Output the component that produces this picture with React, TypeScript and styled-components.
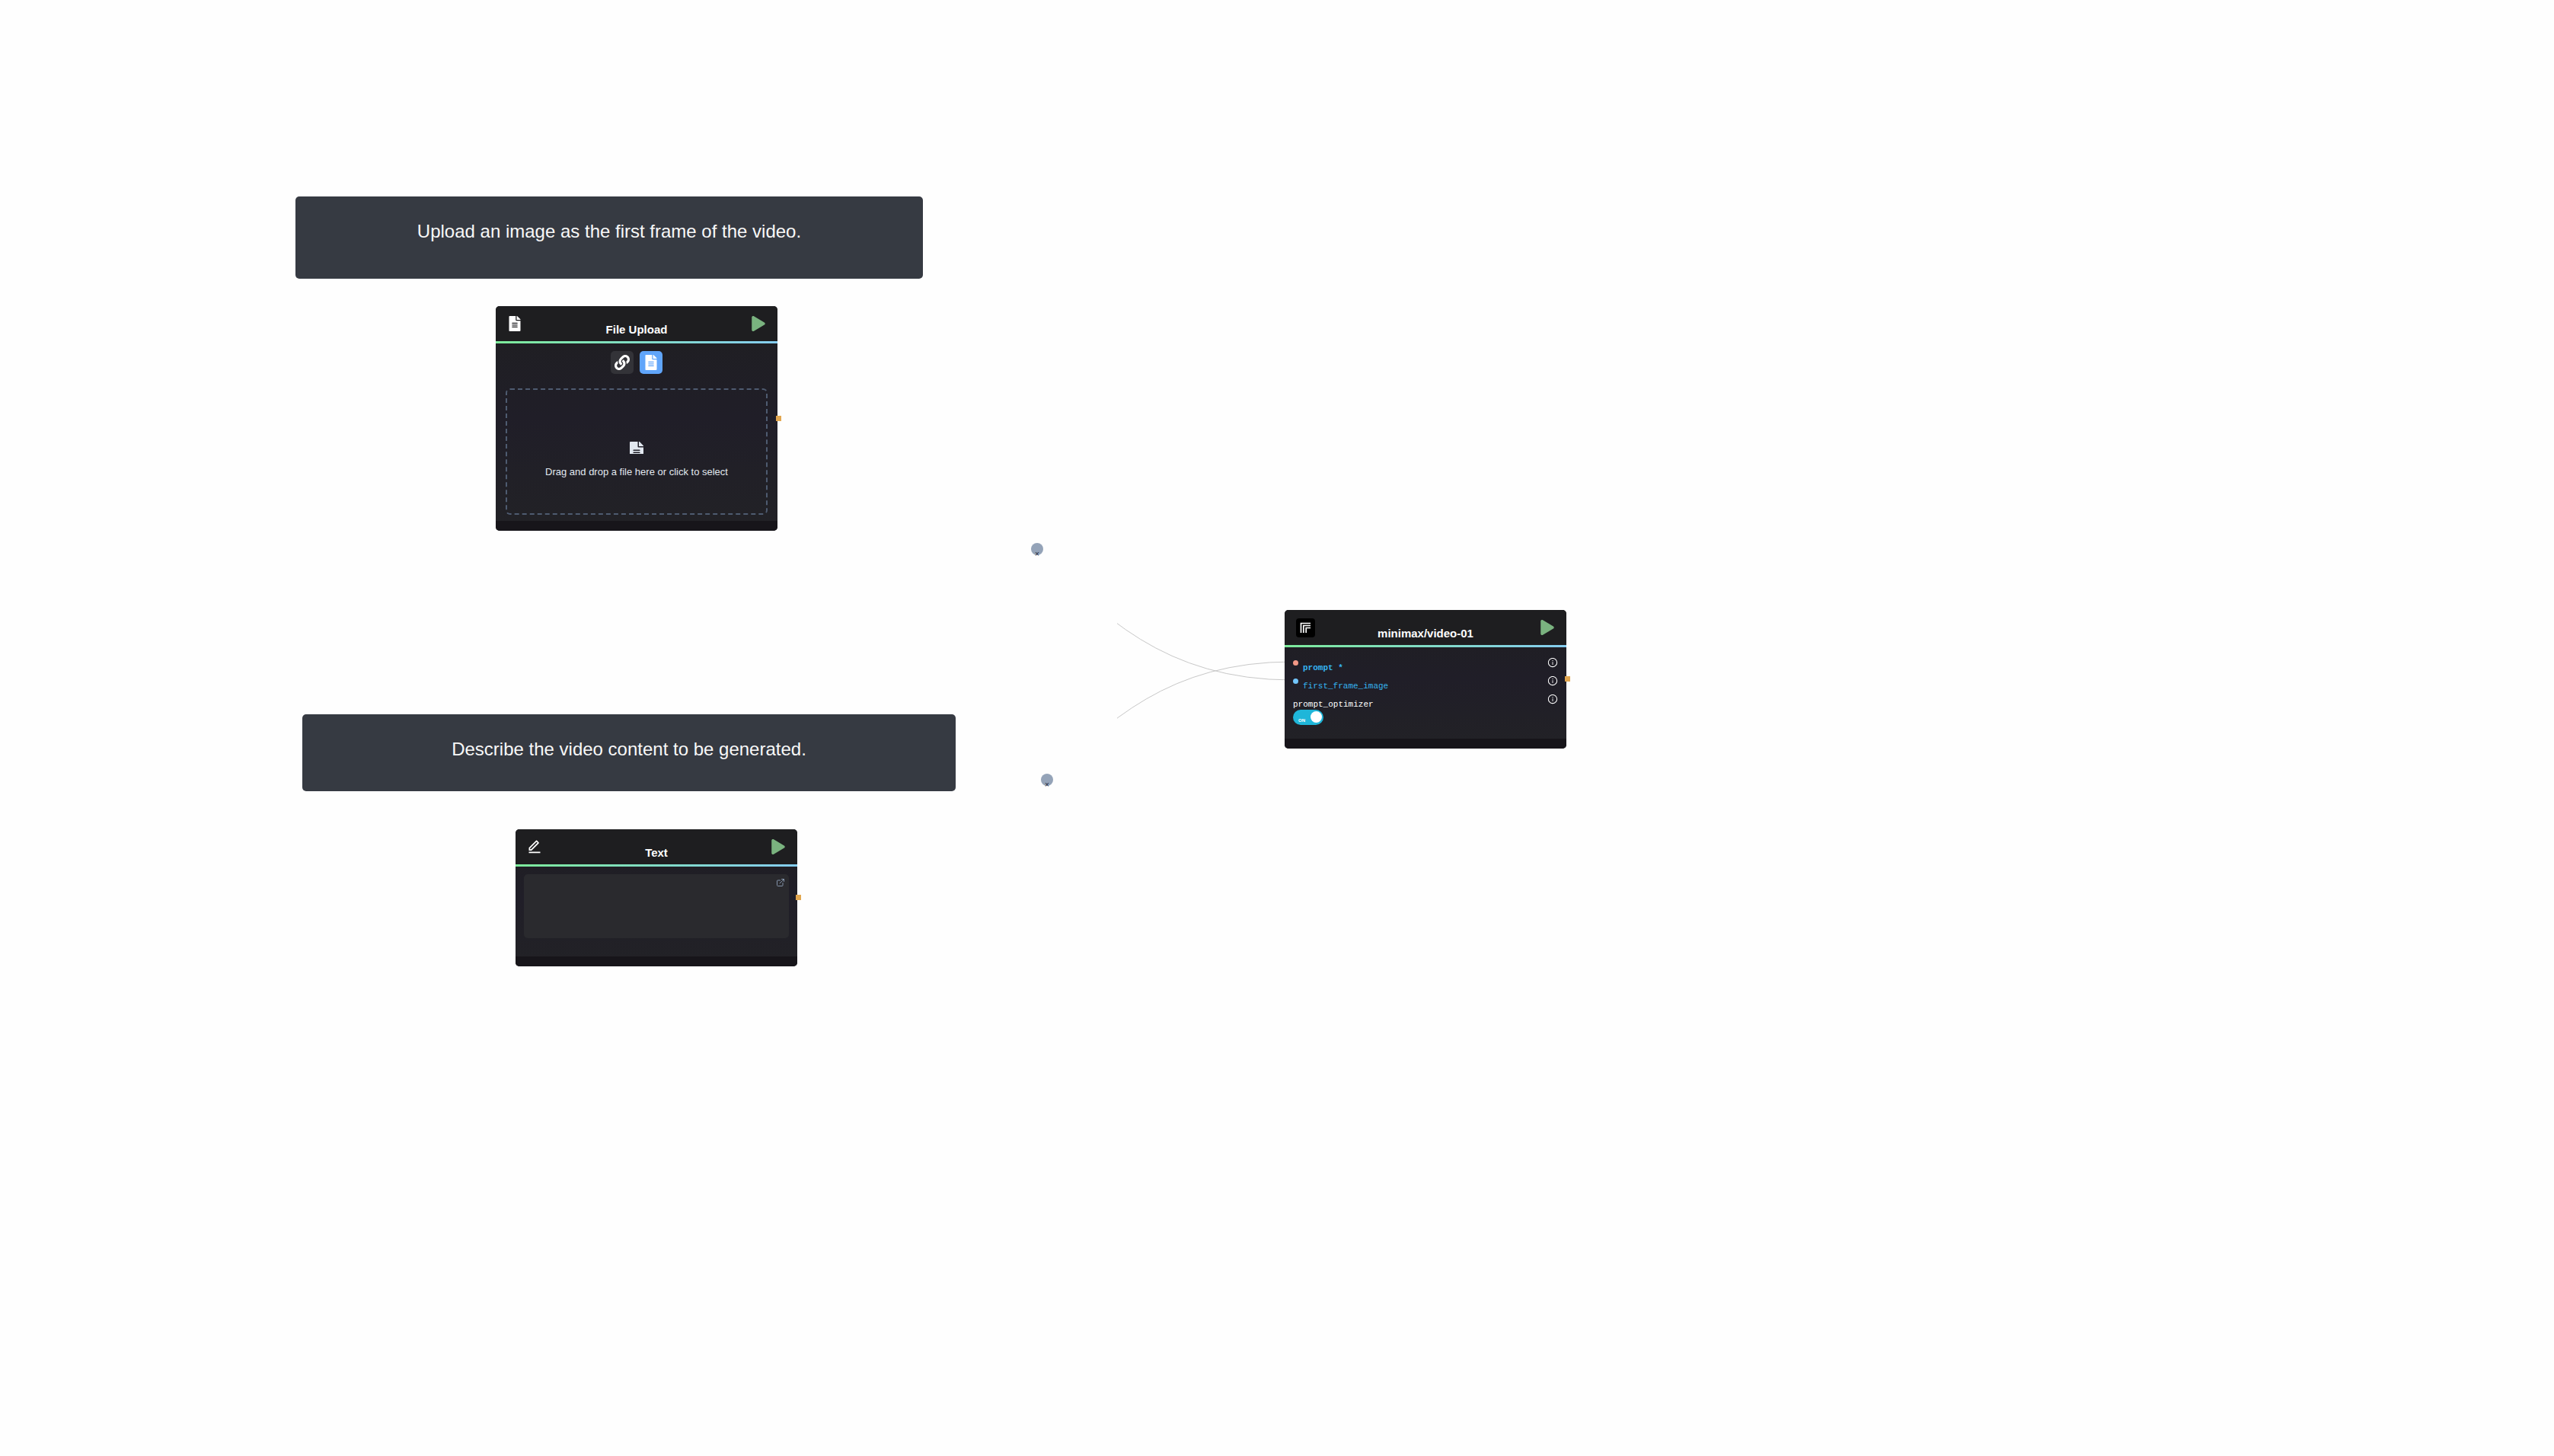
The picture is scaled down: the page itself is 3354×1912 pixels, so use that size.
import React from "react";
import styled, { createGlobalStyle } from "styled-components";
import { FaFileAlt, FaLink, FaPlay } from "react-icons/fa";
import { FiExternalLink } from "react-icons/fi";
import { AiOutlineInfoCircle } from "react-icons/ai";

const sans = `"Liberation Sans", Arial, sans-serif`;
const mono = `"Liberation Mono", "DejaVu Sans Mono", monospace`;

const GlobalStyle = createGlobalStyle`
  *, *::before, *::after { box-sizing: border-box; }
  body { margin: 0; background: #fefefe; font-family: ${sans}; }
  button { font: inherit; border: 0; padding: 0; background: none; cursor: pointer; }
`;

const Canvas = styled.main`
  position: relative;
  min-height: 100vh;
  overflow: hidden;
`;

/* Free canvas item: its place is part of the flow document. */
const Placed = styled.div<{ $x: number; $y: number; $w: number; $h: number }>`
  position: absolute;
  left: ${(p) => p.$x}px;
  top: ${(p) => p.$y}px;
  width: ${(p) => p.$w}px;
  height: ${(p) => p.$h}px;
`;

const Note = styled(Placed)`
  padding: 31px 20px;
  border-radius: 5px;
  background: #363a42;
  color: #f8f8f8;
  font-size: 24px;
  line-height: 30px;
  text-align: center;
`;

const Node = styled(Placed)`
  display: flex;
  flex-direction: column;
  border-radius: 5px;
  background: linear-gradient(#1f1f21, #201e28 50%, #222226);
  color: #fff;
`;

const Header = styled.header`
  display: grid;
  grid-template-columns: 30px 1fr 30px;
  align-items: center;
  height: 46px;
  padding: 0 10px;
  border-radius: 5px 5px 0 0;
  background: #1e1e20;
`;

const HeaderIcon = styled.span`
  display: flex;
  justify-content: center;
  font-size: 20px;
`;

const Title = styled.h2`
  margin: 0;
  padding-top: 16px;
  font-size: 15px;
  line-height: 20px;
  font-weight: 700;
  text-align: center;
`;

const Run = styled.button`
  display: flex;
  justify-content: center;
  color: #7ab37f;
  font-size: 20px;
`;

const Rule = styled.div`
  height: 3px;
  background: linear-gradient(90deg, #7deb9b, #85cdf0);
`;

const Body = styled.div<{ $dense?: boolean }>`
  flex: 1;
  display: flex;
  flex-direction: column;
  padding: ${(p) => (p.$dense ? "8px 11px" : "10px 11px 8px")};
`;

const Footer = styled.footer`
  height: 13px;
  border-radius: 0 0 5px 5px;
  background: #17151a;
`;

const OutPort = styled.i`
  position: absolute;
  right: -5px;
  top: 50%;
  width: 7px;
  height: 7px;
  margin-top: -4px;
  background: #e2a750;
`;

const Modes = styled.div`
  display: flex;
  justify-content: center;
  gap: 8px;
`;

const Mode = styled.button<{ $on?: boolean }>`
  display: grid;
  place-items: center;
  width: 30px;
  height: 30px;
  border-radius: 5px;
  background: ${(p) => (p.$on ? "#60a5fa" : "#333338")};
  color: #fff;
  font-size: 20px;
`;

const Drop = styled.button`
  flex: 1;
  display: flex;
  flex-direction: column;
  align-items: center;
  justify-content: center;
  gap: 16px;
  margin: 19px 2px 0;
  padding-top: 22px;
  border: 2px dashed #4e5b70;
  border-radius: 6px;
  color: #e2e8f0;
  font-size: 13px;
  line-height: 16px;
`;

const DropIcon = styled.span`
  height: 16px;
  overflow: hidden;
  font-size: 24px;
  line-height: 1;
`;

const Field = styled.div`
  position: relative;
  height: 84px;
`;

const Area = styled.textarea`
  display: block;
  width: 100%;
  height: 100%;
  border: 0;
  border-radius: 5px;
  resize: none;
  background: #2a2a2e;
  color: #fff;
`;

const Expand = styled.button`
  position: absolute;
  right: 5px;
  top: 5px;
  display: flex;
  color: #8494ab;
  font-size: 12px;
`;

const Row = styled.div<{ $link?: boolean }>`
  display: flex;
  align-items: center;
  height: 24px;
  color: ${(p) => (p.$link ? "#35b4f1" : "#fff")};
  font-family: ${mono};
  font-size: 11px;
  line-height: 14px;
`;

const Dot = styled.i<{ $c: string }>`
  width: 7px;
  height: 7px;
  margin-right: 6px;
  border-radius: 50%;
  background: ${(p) => p.$c};
`;

const Name = styled.label<{ $bold?: boolean }>`
  flex: 1;
  padding-top: 14px;
  font-weight: ${(p) => (p.$bold ? 700 : 400)};
`;

const Info = styled.button`
  display: flex;
  color: #fff;
  font-size: 14px;
`;

const Switch = styled.span`
  position: relative;
  display: block;
  width: 40px;
  height: 20px;
  margin-top: 2px;
  border-radius: 10px;
  background: #1fb6d9;
`;

const SwitchInput = styled.input`
  position: absolute;
  inset: 0;
  width: 100%;
  height: 100%;
  margin: 0;
  opacity: 0;
  cursor: pointer;
`;

const Knob = styled.span`
  position: absolute;
  right: 2px;
  top: 2px;
  width: 15px;
  height: 15px;
  border-radius: 50%;
  background: #fff;
`;

const On = styled.span`
  position: absolute;
  left: 7px;
  top: 11px;
  font: 700 6px/6px ${sans};
`;

const Edges = styled.svg`
  position: absolute;
  left: 1467px;
  top: 800px;
  width: 234px;
  height: 160px;
  fill: none;
  stroke: #c8c8c8;
  stroke-width: 1;
`;

const Remove = styled.button<{ $x: number; $y: number }>`
  position: absolute;
  left: ${(p) => p.$x}px;
  top: ${(p) => p.$y}px;
  display: flex;
  align-items: flex-start;
  justify-content: center;
  width: 16px;
  height: 16px;
  border-radius: 50%;
  background: #94a3b8;
  color: #1e293b;
`;

const Cross = styled.span`
  padding-top: 10px;
  font-size: 10px;
  line-height: 10px;
`;

const PenIcon = () => (
  <svg width="20" height="20" viewBox="0 0 24 24" fill="currentColor" aria-hidden="true">
    <path d="M6.414 15.890 16.556 5.748l-1.414-1.414L5 14.476v1.414h1.414zm.829 2H3v-4.243L14.435 2.212a1 1 0 0 1 1.414 0l2.829 2.829a1 1 0 0 1 0 1.414L7.243 17.890zM3 19.890h18v2H3v-2z" />
  </svg>
);

const LogoSvg = styled.svg`
  flex: none;
  margin-left: 5px;
`;

const Logo = () => (
  <LogoSvg width="25" height="25" viewBox="0 0 25 25" aria-hidden="true">
    <rect width="25" height="25" rx="4" fill="#000" />
    <path d="M6.500 19V6.500H19M9.800 19V9.500H19M13.200 19V12.500H19" fill="none" stroke="#fff" strokeWidth="1.700" />
  </LogoSvg>
);

const Shell = (p: {
  x: number; y: number; h: number; title: string; dense?: boolean; icon: React.ReactNode; children: React.ReactNode;
}) => (
  <Node $x={p.x} $y={p.y} $w={370} $h={p.h}>
    <Header>
      <HeaderIcon>{p.icon}</HeaderIcon>
      <Title>{p.title}</Title>
      <Run aria-label={`Run ${p.title}`}><FaPlay /></Run>
    </Header>
    <Rule />
    <Body $dense={p.dense}>{p.children}</Body>
    <Footer />
    <OutPort />
  </Node>
);

export default function App() {
  return (
    <>
      <GlobalStyle />
      <Canvas>
        <Edges viewBox="1467 800 234 160" aria-hidden="true">
          <path d="M1026 550C1361 550 1361 893 1697 893" />
          <path d="M1052 1182C1374 1182 1374 869 1697 869" />
        </Edges>
        <Remove $x={1354} $y={713} aria-label="Remove image connection"><Cross>×</Cross></Remove>
        <Remove $x={1367} $y={1016} aria-label="Remove text connection"><Cross>×</Cross></Remove>

        <Note $x={388} $y={258} $w={824} $h={108}>Upload an image as the first frame of the video.</Note>
        <Note $x={397} $y={938} $w={858} $h={101}>Describe the video content to be generated.</Note>

        <Shell x={651} y={402} h={295} title="File Upload" icon={<FaFileAlt />}>
          <Modes>
            <Mode aria-label="Use a link"><FaLink /></Mode>
            <Mode $on aria-label="Use a file"><FaFileAlt /></Mode>
          </Modes>
          <Drop>
            <DropIcon><FaFileAlt /></DropIcon>
            Drag and drop a file here or click to select
          </Drop>
        </Shell>

        <Shell x={677} y={1089} h={180} title="Text" icon={<PenIcon />}>
          <Field>
            <Area aria-label="Text" />
            <Expand aria-label="Open editor"><FiExternalLink /></Expand>
          </Field>
        </Shell>

        <Shell x={1687} y={801} h={182} title="minimax/video-01" dense icon={<Logo />}>
          <Row $link>
            <Dot $c="#f29886" />
            <Name as="span" $bold>prompt *</Name>
            <Info aria-label="About prompt"><AiOutlineInfoCircle /></Info>
          </Row>
          <Row $link>
            <Dot $c="#72c5fb" />
            <Name as="span">first_frame_image</Name>
            <Info aria-label="About first_frame_image"><AiOutlineInfoCircle /></Info>
          </Row>
          <Row>
            <Name htmlFor="optimizer">prompt_optimizer</Name>
            <Info aria-label="About prompt_optimizer"><AiOutlineInfoCircle /></Info>
          </Row>
          <Switch>
            <On>ON</On>
            <Knob />
            <SwitchInput id="optimizer" type="checkbox" defaultChecked />
          </Switch>
        </Shell>
      </Canvas>
    </>
  );
}
